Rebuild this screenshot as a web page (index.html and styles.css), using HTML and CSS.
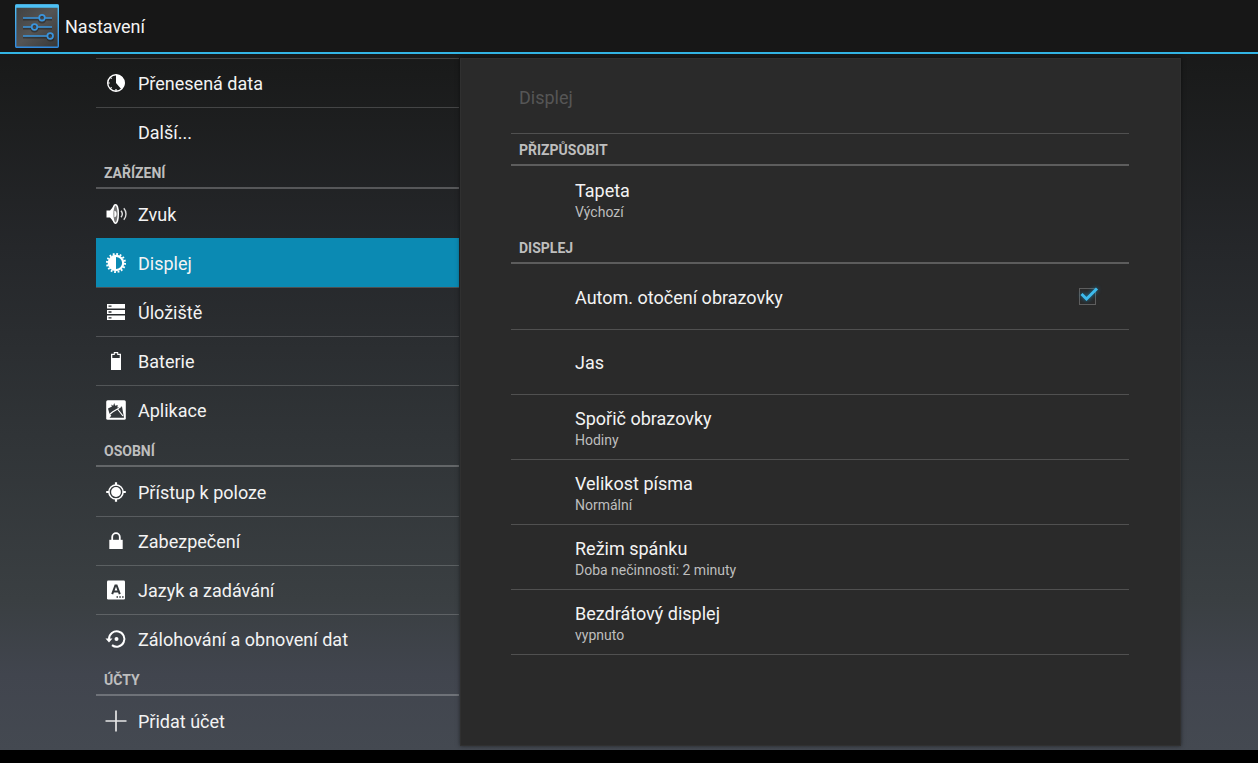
FILE: index.html
```html
<!DOCTYPE html>
<html lang="cs">
<head>
<meta charset="utf-8">
<meta name="viewport" content="width=device-width, initial-scale=1">
<title>Nastavení</title>
<link rel="stylesheet" href="styles.css">
</head>
<body>
<div class="screen">
  <header class="action-bar">
    <svg class="app-icon" viewBox="0 0 44 44" aria-hidden="true">
      <defs>
        <linearGradient id="tile" x1="0" y1="0" x2="1" y2="1">
          <stop offset="0" stop-color="#404040"/><stop offset=".5" stop-color="#545454"/><stop offset="1" stop-color="#363636"/>
        </linearGradient>
        <linearGradient id="rim" x1="0" y1="0" x2="0" y2="1">
          <stop offset="0" stop-color="#4fbdf2"/><stop offset="1" stop-color="#2f8ade"/>
        </linearGradient>
      </defs>
      <rect x=".7" y="1" width="42.6" height="42.3" rx="1" fill="url(#tile)" stroke="url(#rim)" stroke-width="1.4"/>
      <path d="M.5.5h43v3.300H.5z" fill="#4cc0f5"/>
      <g fill="none" stroke="#1c1c1c" stroke-opacity=".5" stroke-width="2">
        <path d="M8 15.500h29M8 24.500h29M8 33.500h27"/>
        <circle cx="27" cy="15.500" r="3"/><circle cx="19.500" cy="24.500" r="3"/><circle cx="35.500" cy="33.500" r="3"/>
      </g>
      <g fill="none" stroke="#3a94dc" stroke-width="1.800">
        <path d="M8 14h16M30 14h7M8 23h8.500M22.500 23H37M8 32h24" stroke-width="1.300"/>
        <circle cx="27" cy="13.700" r="2.800"/><circle cx="19.500" cy="23" r="2.800"/><circle cx="35.200" cy="32" r="2.800"/>
      </g>
    </svg>
    <h1 class="app-title">Nastavení</h1>
  </header>

  <div class="content">
    <nav class="sidebar" aria-label="Nastavení">
      <a class="nav-item divided" href="#">
        <svg class="nav-icon" viewBox="0 0 22 22" aria-hidden="true"><circle cx="11" cy="11" r="8.300" fill="none" stroke="#fff" stroke-width="1.400"/><path d="M11 2.700a8.300 8.300 0 0 1 5.400 14.600L11 11z" fill="#fff"/><path d="M3 11h1.800M11 17v2M5.300 5.300l1.300 1.300M5.300 16.700l1.300-1.300" stroke="#fff" stroke-width="1.200"/></svg>
        <span>Přenesená data</span>
      </a>
      <a class="nav-item divided" href="#"><span class="nav-icon"></span><span>Další...</span></a>
      <h2 class="category">ZAŘÍZENÍ</h2>
      <a class="nav-item" href="#">
        <svg class="nav-icon" viewBox="0 0 22 22" aria-hidden="true"><path d="M1.500 7.500h3.500L10.500 1v20L5 14.500H1.500z" fill="#fff"/><ellipse cx="10.500" cy="11" rx="2.800" ry="9.200" fill="#777" stroke="#fff" stroke-width="1.400"/><path d="M9.300 7.800c3 0 3 6.400 0 6.400z" fill="#fff"/><path d="M16 7.800c1.500 1.800 1.500 4.600 0 6.400M18.800 5.200c2.900 3.300 2.900 8.300 0 11.600" fill="none" stroke="#ddd" stroke-width="1.400"/></svg>
        <span>Zvuk</span>
      </a>
      <a class="nav-item divided selected" href="#" aria-current="page">
        <svg class="nav-icon" viewBox="0 0 22 22" aria-hidden="true"><circle cx="11" cy="11" r="7.200" fill="none" stroke="#fff" stroke-width="2.200"/><circle cx="11" cy="11" r="9" fill="none" stroke="#fff" stroke-width="2" stroke-dasharray="1.800 1.734"/><path d="M11 4a7 7 0 0 0 0 14z" fill="#fff"/></svg>
        <span>Displej</span>
      </a>
      <a class="nav-item divided" href="#">
        <svg class="nav-icon" viewBox="0 0 22 22" aria-hidden="true"><path d="M2 3h18v4.500H2zM2 9h18v4H2zM2 14.500h18V19H2z" fill="#fff"/><path d="M3.500 5.200h3M3.500 11h3M3.500 16.800h3" stroke="#2b2e30" stroke-width="1.300"/></svg>
        <span>Úložiště</span>
      </a>
      <a class="nav-item divided" href="#">
        <svg class="nav-icon" viewBox="0 0 22 22" aria-hidden="true"><path d="M8.800 2h4.400v1.800H16V20H6V3.800h2.800z" fill="#fff"/><path d="M9.800 3.200h2.400v1.700h2.500V8H7.300V4.900h2.500z" fill="#303437"/></svg>
        <span>Baterie</span>
      </a>
      <a class="nav-item divided" href="#">
        <svg class="nav-icon" viewBox="0 0 22 22" aria-hidden="true"><rect x="1.200" y="1.200" width="19.600" height="19.600" rx="1.500" fill="#fff"/><path d="M4.500 14.800 3 9.500l4-2-1-2 2.200 1.200 1-2.700 1 2.800 2.500-.8-.3 2.500 4.600-1L19 18.800H4.500l1.800-2z" fill="#34383b"/><path d="M3 16.800 7.500 13l5-3 3.500-2.500M12.500 10l5.500 7" fill="none" stroke="#fff" stroke-width="1.200"/></svg>
        <span>Aplikace</span>
      </a>
      <h2 class="category">OSOBNÍ</h2>
      <a class="nav-item" href="#">
        <svg class="nav-icon" viewBox="0 0 22 22" aria-hidden="true"><circle cx="11" cy="11" r="4.900" fill="#fff"/><circle cx="11" cy="11" r="7.100" fill="none" stroke="#fff" stroke-width="1.500"/><path d="M11 1.200v3M11 17.800v3M1.200 11h3M17.800 11h3" stroke="#fff" stroke-width="2.200"/></svg>
        <span>Přístup k poloze</span>
      </a>
      <a class="nav-item divided" href="#">
        <svg class="nav-icon" viewBox="0 0 22 22" aria-hidden="true"><path d="M4.300 9.800h13.400V19H4.300z" fill="#fff"/><path d="M7.200 10.500V7a3.800 3.800 0 0 1 7.600 0v3.500" fill="none" stroke="#fff" stroke-width="1.800"/></svg>
        <span>Zabezpečení</span>
      </a>
      <a class="nav-item divided" href="#">
        <svg class="nav-icon" viewBox="0 0 22 22" aria-hidden="true"><rect x="2" y="1.500" width="18" height="19" rx="1.200" fill="#fff"/><path d="m7.200 15.200 3.200-8.700h1.200l3.200 8.700M8.500 12.500h5" fill="none" stroke="#34383b" stroke-width="2"/><path d="M11.500 18h1.500M14.300 18h1.500M17.100 18h1.500" stroke="#34383b" stroke-width="1.500"/></svg>
        <span>Jazyk a zadávání</span>
      </a>
      <a class="nav-item divided" href="#">
        <svg class="nav-icon" viewBox="0 0 22 22" aria-hidden="true"><path d="M4 11a7.700 7.700 0 1 1 3 6.100" fill="none" stroke="#fff" stroke-width="2"/><path d="M.5 10.500h7L4 14.500z" fill="#fff"/><circle cx="11.500" cy="11" r="2" fill="#fff"/></svg>
        <span>Zálohování a obnovení dat</span>
      </a>
      <h2 class="category">ÚČTY</h2>
      <a class="nav-item" href="#">
        <svg class="nav-icon" viewBox="0 0 22 22" aria-hidden="true"><path d="M11 .5v21M.5 11h21" stroke="#e6e6e6" stroke-width="1.700"/></svg>
        <span>Přidat účet</span>
      </a>
    </nav>

    <main class="pane">
      <h2 class="pane-title">Displej</h2>
      <h3 class="category divided">PŘIZPŮSOBIT</h3>
      <button class="pref" type="button"><span class="pref-name">Tapeta</span><span class="pref-value">Výchozí</span></button>
      <h3 class="category">DISPLEJ</h3>
      <label class="pref pref-check">
        <span class="pref-name">Autom. otočení obrazovky</span>
        <span class="check">
          <input class="check-box" type="checkbox" checked>
          <svg class="check-mark" viewBox="0 0 24 20" aria-hidden="true"><path d="m4.500 9 5 5L20 3.500" fill="none" stroke="#3dbbee" stroke-width="3"/></svg>
        </span>
      </label>
      <button class="pref divided" type="button"><span class="pref-name">Jas</span></button>
      <button class="pref divided" type="button"><span class="pref-name">Spořič obrazovky</span><span class="pref-value">Hodiny</span></button>
      <button class="pref divided" type="button"><span class="pref-name">Velikost písma</span><span class="pref-value">Normální</span></button>
      <button class="pref divided" type="button"><span class="pref-name">Režim spánku</span><span class="pref-value">Doba nečinnosti: 2 minuty</span></button>
      <button class="pref divided last" type="button"><span class="pref-name">Bezdrátový displej</span><span class="pref-value">vypnuto</span></button>
    </main>
  </div>
</div>
</body>
</html>
```
FILE: styles.css
```css
* { box-sizing: border-box; }

body {
  margin: 0;
  min-height: 100vh;
  display: flex;
  flex-direction: column;
  padding-bottom: 13px;
  background: #000;
  color: #f3f3f3;
  font-family: Roboto, "Noto Sans", sans-serif;
  font-size: 18px;
}

h1, h2, h3 { margin: 0; font-weight: 400; }

.screen {
  flex: 1;
  display: flex;
  flex-direction: column;
  background: linear-gradient(#151515, #1a1b1b 10%, #25272a 33%, #303437 58%, #3a3f42 80%, #41454e 90%, #444951);
}

.action-bar {
  display: flex;
  align-items: center;
  gap: 6px;
  height: 54px;
  padding: 0 15px;
  background: #171717;
  border-bottom: 2px solid #33b5e5;
}

.app-icon { width: 44px; height: 44px; }
.app-title { padding-top: 2px; font-size: 18px; line-height: 24px; }

.content {
  flex: 1;
  display: grid;
  grid-template-columns: 363fr 721fr;
  column-gap: 1px;
  padding: 4px 77px 4px 96px;
}

.nav-item {
  display: flex;
  align-items: center;
  gap: 11px;
  height: 49px;
  padding: 1px 9px 0;
  color: inherit;
  text-decoration: none;
}

.nav-icon { flex: none; width: 22px; height: 22px; }

.divided {
  padding-top: 0;
  border-top: 1px solid rgba(255, 255, 255, 0.18);
}

.selected { background: #0b8ab3; border-top-color: transparent; }

.category {
  height: 33px;
  padding: 1px 8px 0;
  border-bottom: 2px solid rgba(255, 255, 255, 0.24);
  color: #bebebe;
  font-size: 14px;
  font-weight: 700;
  line-height: 32px;
}

.category.divided { padding-top: 0; }

.pane {
  padding: 0 51px 0 50px;
  background: #2a2a2a;
  border: 1px solid #303030;
  box-shadow: 0 0 4px rgba(0, 0, 0, 0.5);
}

.pane-title {
  height: 74px;
  padding: 2px 8px 0;
  color: #565656;
  font-size: 18px;
  line-height: 74px;
}

.pref {
  display: flex;
  flex-direction: column;
  justify-content: center;
  width: 100%;
  height: 65px;
  padding: 3px 33px 0 64px;
  border: 0 solid rgba(255, 255, 255, 0.18);
  background: none;
  color: inherit;
  font: inherit;
  text-align: left;
}

.pref.divided { border-top-width: 1px; padding-top: 2px; }
.pref.last { height: 66px; border-bottom-width: 1px; }

.pref-name { line-height: 24px; }
.pref-value { color: #bebebe; font-size: 14px; line-height: 18px; }

.pref-check {
  flex-direction: row;
  align-items: center;
  justify-content: space-between;
}

.check { position: relative; display: flex; margin-bottom: 3px; }

.check-box {
  appearance: none;
  width: 17px;
  height: 17px;
  margin: 0;
  border: 1px solid #5e5e5e;
}

.check-mark {
  position: absolute;
  left: -2px;
  top: -3px;
  width: 24px;
  height: 20px;
  display: none;
  pointer-events: none;
  filter: drop-shadow(0 0 2px #1b7ea8);
}

.check-box:checked + .check-mark { display: block; }
```
